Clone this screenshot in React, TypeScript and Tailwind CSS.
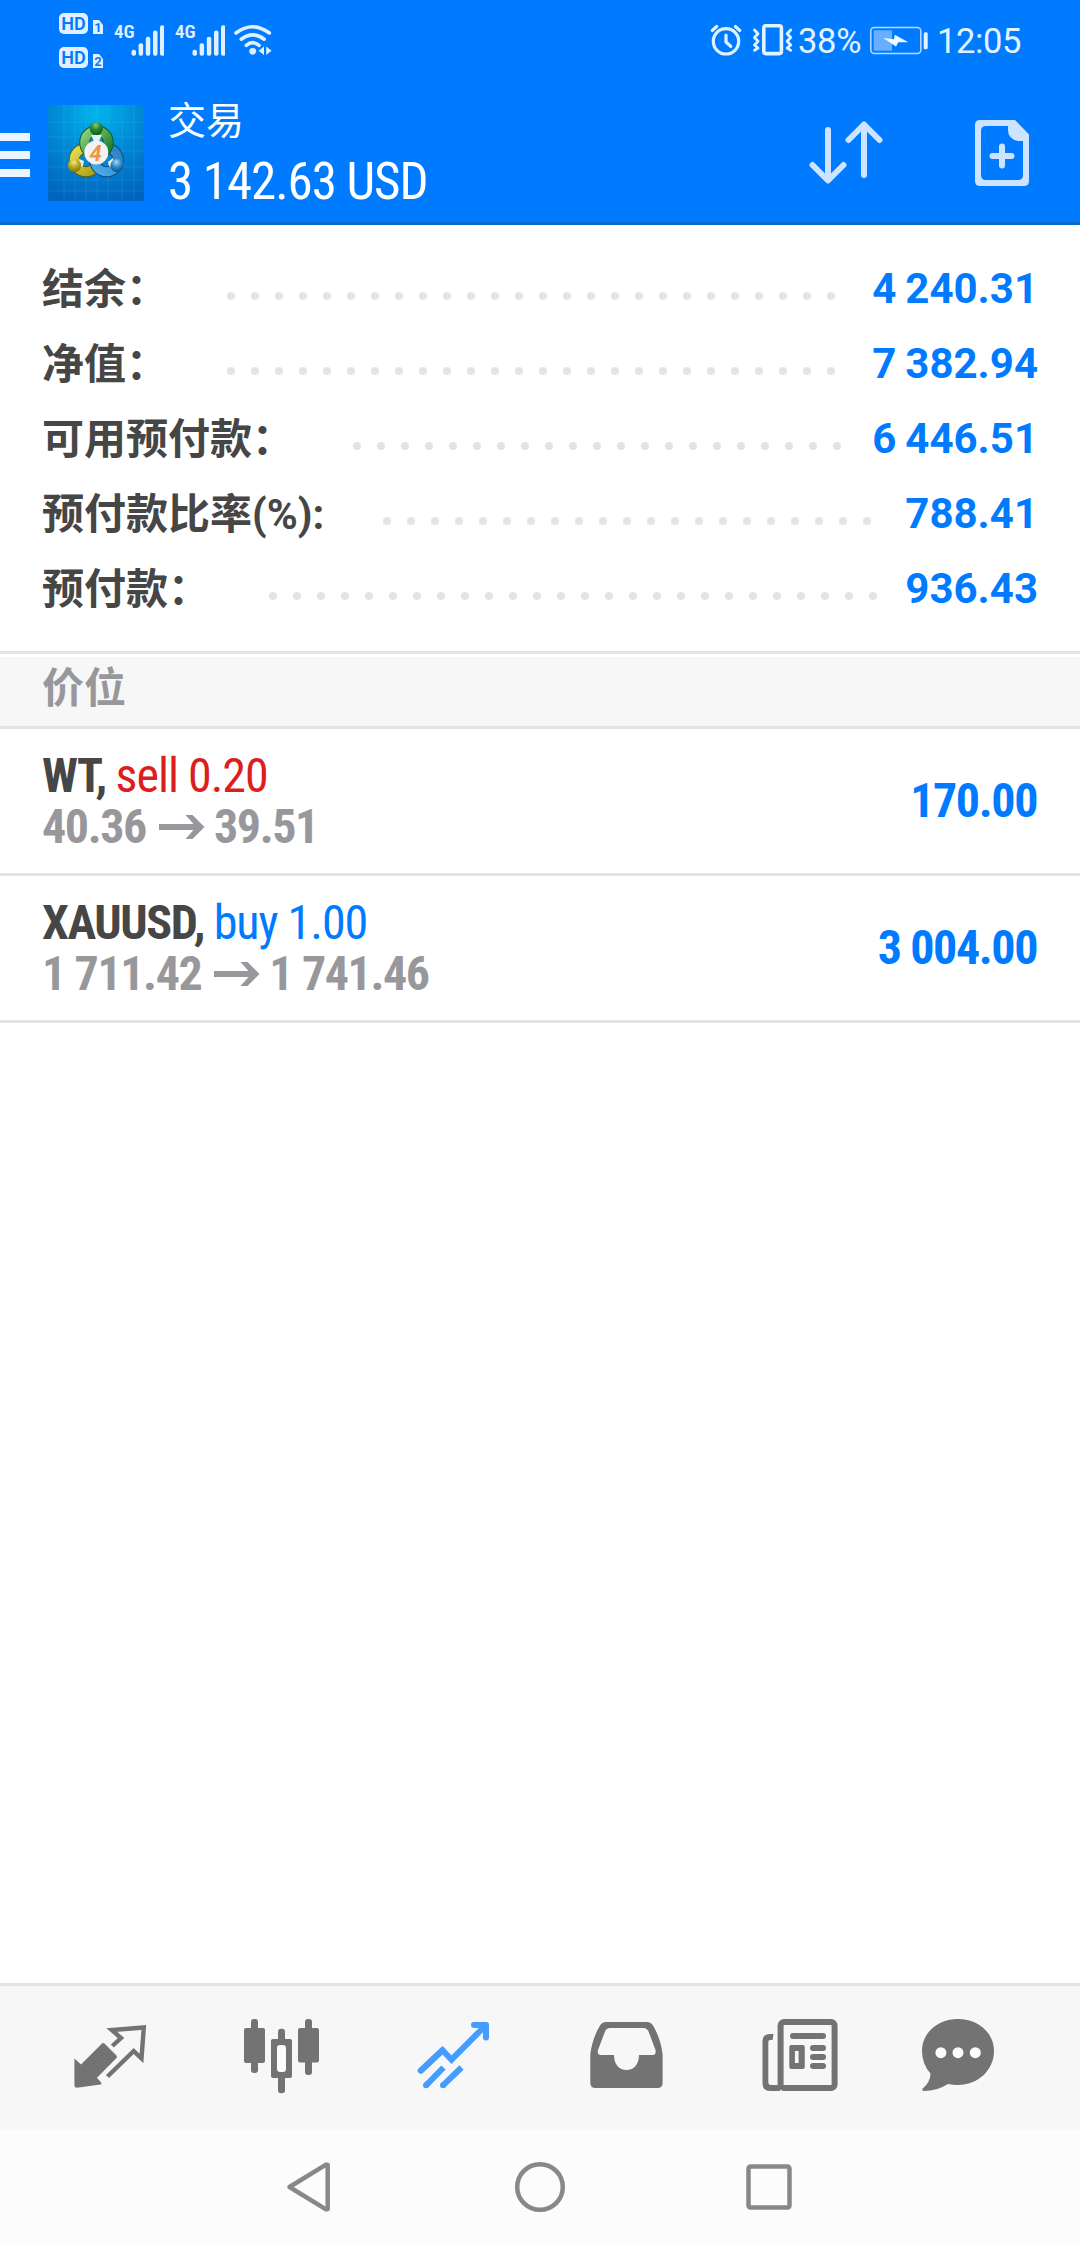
import type { ReactNode } from "react";

const condensed = "[font-stretch:75%]";

const summary = [
  { label: "结余：", dots: 26, value: "4 240.31" },
  { label: "净值：", dots: 26, value: "7 382.94" },
  { label: "可用预付款：", dots: 21, value: "6 446.51" },
  { label: "预付款比率(%):", dots: 21, value: "788.41" },
  { label: "预付款：", dots: 26, value: "936.43" },
];

const positions = [
  { symbol: "WT", side: "sell 0.20", tone: "text-[#dc1e1e]", open: "40.36", now: "39.51", profit: "170.00" },
  { symbol: "XAUUSD", side: "buy 1.00", tone: "text-[#007aff]", open: "1 711.42", now: "1 741.46", profit: "3 004.00" },
];

function HdBadge({ sim }: { sim: string }) {
  return (
    <div className="flex h-[21px] items-end gap-[5px] text-[#007aff]">
      <span className="flex h-[21px] w-[29px] items-center justify-center rounded-[5px] bg-[#e0f0ff] text-[18px] leading-none font-semibold">HD</span>
      <span className="flex h-[14px] w-[10px] items-center justify-center bg-[#e0f0ff] text-[13px] leading-none font-bold [clip-path:polygon(0_0,60%_0,100%_35%,100%_100%,0_100%)]">{sim}</span>
    </div>
  );
}

function Signal() {
  return (
    <div className="flex h-[31px] w-[50px] items-start">
      <span className={`w-[17px] text-[19px] leading-[14px] font-semibold text-[#e0f0ff] ${condensed}`}>4G</span>
      <svg width="33" height="31" viewBox="131 24.5 33 31" fill="#e0f0ff">
        <rect x="131.5" y="49.3" width="4.5" height="6" rx="2" />
        <rect x="138.6" y="42.7" width="4.5" height="12.6" rx="2" />
        <rect x="145.8" y="36.3" width="4.5" height="19" rx="2" />
        <rect x="153" y="30" width="4.5" height="25.3" rx="2" />
        <rect x="160" y="24.8" width="4.5" height="30.5" rx="2" />
      </svg>
    </div>
  );
}

function StatusBar() {
  return (
    <div className="flex h-[84px] items-start pl-[59px]">
      <div className="mt-[13px] flex w-[45px] flex-col gap-[13px]">
        <HdBadge sim="1" />
        <HdBadge sim="2" />
      </div>
      <div className="mt-[25px] ml-[10px] flex gap-[11px]">
        <Signal />
        <Signal />
      </div>
      <svg className="mt-[24px] ml-[9px]" width="40" height="32" viewBox="234 24 40 32" fill="none" stroke="#e0f0ff" strokeWidth="3.6" strokeLinecap="round">
        <path d="M236 33 Q252.7 20.5 269.4 33" />
        <path d="M241.2 39.2 Q252.7 30.5 264.2 39.2" />
        <path d="M246.3 45.3 Q252.7 40 259.1 45.3" />
        <circle cx="252.7" cy="51.3" r="3.4" fill="#e0f0ff" stroke="none" />
        <path d="M264 46.5 V55 L258.6 50.8 Z M266.2 46.5 V55 L271.6 50.8 Z" fill="#e0f0ff" stroke="none" />
      </svg>
      <svg className="mt-[22px] ml-[436px]" width="84" height="36" viewBox="710 22 84 36" fill="none" stroke="#e0f4ff" strokeWidth="3.2" strokeLinecap="round" strokeLinejoin="round">
        <circle cx="726" cy="41.3" r="12.7" />
        <path d="M726 35 V42 L730.7 46.3 M712.3 30.5 L716.7 26.5 M735.4 26.5 L739.8 30.5" />
        <rect x="763.8" y="25.8" width="17.6" height="27.8" rx="2" strokeWidth="3.6" />
        <path d="M754.5 30 L758 33.7 L754.5 37.5 L758 41.3 L754.5 45 L758 48 L754.5 50.3 M790.7 30 L787.2 33.7 L790.7 37.5 L787.2 41.3 L790.7 45 L787.2 48 L790.7 50.3" strokeWidth="2.8" />
      </svg>
      <span className="mt-[21px] ml-[4px] w-[72px] text-[34.5px] leading-[40px] tracking-[-0.3px] text-[#e0f4ff]">38%</span>
      <svg className="mt-[24px]" width="60" height="34" viewBox="870 24 60 34">
        <rect x="870.8" y="27.4" width="50" height="26" rx="3.5" fill="none" stroke="#b8dcff" strokeWidth="1.5" />
        <path d="M873.7 30.3 H892 V50.7 H873.7 Z" fill="#66b0ff" />
        <path d="M883.3 38 L893.8 39.2 L894.8 34.7 L908.3 42.3 L898.3 42.3 L896 46.6 Z" fill="#f0faff" />
        <rect x="923.7" y="32.3" width="4" height="17" rx="1.5" fill="#e0f4ff" />
      </svg>
      <span className="mt-[21px] ml-[7px] text-[34.5px] leading-[40px] tracking-[-0.4px] text-[#e0f4ff]">12:05</span>
    </div>
  );
}

function AppLogo() {
  return (
    <svg width="96" height="96" viewBox="0 0 96 96">
      <defs>
        <radialGradient id="sky" cx="0.5" cy="0.08" r="0.95">
          <stop offset="0" stopColor="#00b4ec" />
          <stop offset="0.5" stopColor="#0088d4" />
          <stop offset="1" stopColor="#0064be" />
        </radialGradient>
        <linearGradient id="green" x1="0" y1="0" x2="1" y2="1">
          <stop offset="0" stopColor="#8fd07c" />
          <stop offset="1" stopColor="#157a28" />
        </linearGradient>
        <linearGradient id="yellow" x1="0" y1="0" x2="1" y2="1">
          <stop offset="0" stopColor="#e4dc50" />
          <stop offset="1" stopColor="#a89e18" />
        </linearGradient>
        <linearGradient id="blue" x1="1" y1="0" x2="0" y2="1">
          <stop offset="0" stopColor="#2a80c4" />
          <stop offset="1" stopColor="#4cace8" />
        </linearGradient>
        <radialGradient id="greenHead" cx="0.45" cy="0.25" r="0.75">
          <stop offset="0" stopColor="#8ccc80" />
          <stop offset="0.45" stopColor="#2c8a34" />
          <stop offset="1" stopColor="#0c5a1c" />
        </radialGradient>
        <radialGradient id="yellowHead" cx="0.45" cy="0.25" r="0.75">
          <stop offset="0" stopColor="#f0ea80" />
          <stop offset="0.5" stopColor="#b8ac20" />
          <stop offset="1" stopColor="#7c7408" />
        </radialGradient>
        <radialGradient id="blueHead" cx="0.45" cy="0.25" r="0.75">
          <stop offset="0" stopColor="#a0d8f8" />
          <stop offset="0.5" stopColor="#2c88cc" />
          <stop offset="1" stopColor="#0c5090" />
        </radialGradient>
      </defs>
      <rect width="96" height="96" fill="url(#sky)" />
      <path d="M16 0V96M27 0V96M38 0V96M49 0V96M60 0V96M74 0V96M86 0V96M0 17H96M0 32H96M0 46H96M0 62H96M0 75H96M0 86H96" stroke="#8fd8ff" strokeOpacity="0.12" strokeWidth="1" />
      <g fill="none">
        <circle cx="38" cy="55" r="11.8" stroke="#5f5c10" strokeWidth="11" />
        <circle cx="38" cy="55" r="11.8" stroke="url(#yellow)" strokeWidth="9" />
        <circle cx="58.5" cy="55" r="11.8" stroke="#0a4c84" strokeWidth="11" />
        <circle cx="58.5" cy="55" r="11.8" stroke="url(#blue)" strokeWidth="9" />
        <circle cx="48.5" cy="37.5" r="11.8" stroke="#0f5a30" strokeWidth="11" />
        <circle cx="48.5" cy="37.5" r="11.8" stroke="url(#green)" strokeWidth="9" />
      </g>
      <path d="M43 30 H54 L51 36 H46 Z M31 54 L36 56 L35 61 L30 64 Z M65 53 L60 57 L61 61 L67 64 Z" fill="#e6f0e4" />
      <circle cx="48.3" cy="23.5" r="6.6" fill="url(#greenHead)" />
      <circle cx="26.5" cy="60.5" r="6.6" fill="url(#yellowHead)" />
      <circle cx="69" cy="60.5" r="6.6" fill="url(#blueHead)" />
      <circle cx="48.3" cy="47.5" r="12" fill="#f2f2f2" />
      <text x="47.5" y="55.5" textAnchor="middle" fontFamily="Roboto" fontSize="22" fontStyle="italic" fontWeight="700" fill="#f6953a">4</text>
    </svg>
  );
}

function Header() {
  return (
    <div className="flex h-[138px] items-start">
      <div className="mt-[49px] flex w-[30px] flex-col gap-[10px]">
        <i className="h-[8px] bg-[#ebf5ff]" />
        <i className="h-[8px] bg-[#ebf5ff]" />
        <i className="h-[8px] bg-[#ebf5ff]" />
      </div>
      <div className="mt-[21px] ml-[18px]">
        <AppLogo />
      </div>
      <div className="ml-[24px] w-[560px] whitespace-nowrap text-white">
        <div className="mt-[13px] text-[38px] leading-[48px]">交易</div>
        <div className={`mt-[7px] text-[51px] leading-[60px] tracking-[-1.05px] ${condensed}`}>3 142.63 USD</div>
      </div>
      <svg className="mt-[31px] ml-[77px]" width="80" height="76" viewBox="805 115 80 76" fill="none" stroke="#cce4ff" strokeWidth="6" strokeLinecap="round" strokeLinejoin="round">
        <path d="M828 130 V180 M812.5 165 L828 180.5 L843.5 165" />
        <path d="M864 175 V124.5 M848.5 140 L864 124.5 L879.5 140" />
      </svg>
      <svg className="mt-[31px] ml-[85px]" width="64" height="76" viewBox="970 115 64 76">
        <path fillRule="evenodd" fill="#cce4ff" d="M980 120 H1015 L1029 134.5 V181 Q1029 186 1024 186 H980 Q975 186 975 181 V125 Q975 120 980 120 Z M986 126 Q981 126 981 131 V175 Q981 180 986 180 H1018 Q1023 180 1023 175 V141 H1018 Q1008 139 1008 130 V126 Z" />
        <path d="M992.5 156 H1011.5 M1002 146.5 V165.5" stroke="#cce4ff" strokeWidth="6" strokeLinecap="round" />
      </svg>
    </div>
  );
}

function PriceArrow() {
  return (
    <svg className="mt-[13px] mr-[9px] ml-[13px]" width="46" height="26" viewBox="0 0 46 26" fill="#98989c">
      <path d="M0 10 H34.5 L26.5 1 H33.5 L45.5 13 L33.5 25 H26.5 L34.5 16 H0 Z" />
    </svg>
  );
}

function Tab({ x, children }: { x: number; children: ReactNode }) {
  return (
    <div className="flex w-[172px] justify-center pt-[20px]">
      <svg width="100" height="100" viewBox={`${x} 2006 100 100`} fill="#737373">
        {children}
      </svg>
    </div>
  );
}

function TabBar() {
  return (
    <div className="flex h-[147px] border-t-[3px] border-[#e4e4e4] bg-[#f7f7f7] pl-[24px]">
      <Tab x={60}>
        <path d="M74.4 2058.5 L81 2064.5 L102 2043.5 Q103 2042.5 104.5 2043.5 L116.5 2055.5 Q117.5 2056.7 116.5 2058 L97 2077.7 L101.5 2083 Q101.5 2084 100.5 2084.5 L77 2087.7 Q74.4 2087.7 74.4 2085.5 Z" />
        <path d="M112.3 2046 L121 2038 L111.8 2030 L143.8 2027.5 L141.5 2058.5 L133.7 2051 L107.5 2076.5" fill="none" stroke="#737373" strokeWidth="4.4" />
      </Tab>
      <Tab x={232}>
        <rect x="244" y="2028" width="21" height="35" rx="2" />
        <rect x="251" y="2019" width="7" height="54" rx="3" />
        <rect x="271" y="2039" width="21" height="39" rx="2" />
        <rect x="278" y="2028.7" width="7" height="64.5" rx="3" />
        <rect x="277" y="2045" width="9" height="27" rx="3" fill="#fcfcfc" />
        <rect x="298" y="2028" width="21" height="34.5" rx="2" />
        <rect x="305" y="2019" width="7" height="56" rx="3" />
      </Tab>
      <Tab x={404}>
        <g fill="none" stroke="#449cff" strokeWidth="6">
          <path d="M442.5 2050.3 L420.7 2070.7 M474 2025 H486 V2037.5" strokeLinecap="round" strokeLinejoin="round" />
          <path d="M420.7 2070.7 L442.5 2050.3 L451.5 2059.7 L486 2025" />
          <path d="M426 2085.3 L443.5 2067.5 M443 2085.3 L461.5 2067.5" />
        </g>
        <circle cx="426" cy="2085.3" r="3" fill="#449cff" />
        <circle cx="443" cy="2085.3" r="3" fill="#449cff" />
      </Tab>
      <Tab x={576}>
        <path fillRule="evenodd" d="M590.3 2054 Q592.5 2038 600 2025.5 Q602 2022 606 2022 H647 Q651 2022 653 2025.5 Q660.5 2038 662.6 2054 V2083 Q662.6 2088 657.6 2088 H595.3 Q590.3 2088 590.3 2083 Z M610 2028 Q606.5 2028 605 2031.5 L598 2050 Q597 2055 601 2055 H614 C614 2064 619 2070 626.5 2070 C634 2070 639 2064 639 2055 H652 Q656.5 2055 655.5 2050 L648.5 2031.5 Q647 2028 643.5 2028 Z" />
      </Tab>
      <Tab x={748}>
        <rect x="780.6" y="2022" width="54" height="66" rx="3.5" fill="none" stroke="#737373" strokeWidth="6" />
        <path d="M773.5 2034 L772.5 2040 H770 Q768.3 2040 768.3 2042 V2082 Q768.3 2085 771 2085 H780 V2091 H770 Q762.5 2091 762.5 2083 V2041 Q762.5 2034 770 2034 Z" />
        <rect x="790" y="2033" width="36" height="6" rx="3" />
        <path fillRule="evenodd" d="M791.3 2045 H802.8 Q804.8 2045 804.8 2047 V2067 Q804.8 2069 802.8 2069 H791.3 Q789.3 2069 789.3 2067 V2047 Q789.3 2045 791.3 2045 Z M794.9 2051 V2063 H798.6 V2051 Z" />
        <rect x="810" y="2045" width="16" height="6" rx="3" />
        <rect x="810" y="2054" width="16" height="6" rx="3" />
        <rect x="810" y="2063" width="16" height="6" rx="3" />
      </Tab>
      <Tab x={920}>
        <path d="M958 2019 C978 2019 994 2032.5 994 2051 C994 2070 978 2085 958 2085 Q953 2085 948 2084 Q937 2091 924 2091 Q921.5 2090.5 922.5 2088.8 Q930.5 2082 930.5 2073.5 Q922 2064 922 2051 C922 2032.5 938 2019 958 2019 Z" />
        <g fill="#fcfcfc">
          <circle cx="940.9" cy="2052.7" r="5.5" />
          <circle cx="958" cy="2052.7" r="5.5" />
          <circle cx="975.3" cy="2052.7" r="5.5" />
        </g>
      </Tab>
    </div>
  );
}

export default function App() {
  return (
    <div className="flex h-[2244px] w-[1080px] flex-col overflow-hidden bg-white font-[Roboto,'Noto_Sans_CJK_SC',sans-serif]">
      <header className="h-[225px] border-b-[3px] border-[#0b68cc] bg-[#007aff]">
        <StatusBar />
        <Header />
      </header>

      <section className="h-[429px] border-b-[3px] border-[#e4e4e4] pt-[26px] pr-[42px] pl-[42px] text-[42px] leading-[75px] font-bold">
        {summary.map((row) => (
          <div key={row.label} className="flex h-[75px] whitespace-nowrap">
            <span className="pt-px text-[#464646]">{row.label}</span>
            <span className="mt-[41px] ml-[58.5px] flex gap-4">
              {Array.from({ length: row.dots }, (_, i) => (
                <i key={i} className="size-2 rounded-full bg-[#e4e4e4]" />
              ))}
            </span>
            <span className="ml-auto text-[#007aff] [word-spacing:-1.5px]">{row.value}</span>
          </div>
        ))}
      </section>

      <h2 className="mt-[3px] h-[72px] border-b-[3px] border-[#e4e4e4] bg-[#f7f7f7] pl-[42px] text-[42px] leading-[63px] font-bold text-[#98989c]">价位</h2>

      <main className="flex-1">
        {positions.map((p) => (
          <div key={p.symbol} className={`flex h-[147px] justify-between border-b-[3px] border-[#e4e4e4] pr-[43px] pl-[42px] text-[48px] leading-[51px] tracking-[-1.4px] whitespace-nowrap ${condensed}`}>
            <div className="pt-[21px]">
              <div>
                <b className="font-bold text-[#464646]">{p.symbol},</b> <span className={`tracking-[-1px] ${p.tone}`}>{p.side}</span>
              </div>
              <div className="flex font-bold text-[#98989c]">
                <span>{p.open}</span>
                <PriceArrow />
                <span>{p.now}</span>
              </div>
            </div>
            <div className="pt-[46px] font-bold text-[#007aff]">{p.profit}</div>
          </div>
        ))}
      </main>

      <TabBar />

      <nav className="flex h-[114px] items-center justify-center gap-[176px] bg-[#fcfcfc]">
        <svg width="54" height="54" viewBox="283 2160 54 54" fill="none" stroke="#888888" strokeWidth="4.5" strokeLinejoin="round">
          <path d="M289.5 2187 L326 2164.6 L327.7 2165 V2209 L326 2209.4 Z" />
        </svg>
        <svg width="54" height="54" viewBox="0 0 54 54" fill="none" stroke="#888888" strokeWidth="4.5">
          <circle cx="27" cy="27" r="22.8" />
        </svg>
        <svg width="54" height="54" viewBox="1 0 54 54" fill="none" stroke="#888888" strokeWidth="4.5">
          <rect x="6.5" y="6.5" width="41" height="41" rx="2" />
        </svg>
      </nav>
    </div>
  );
}
